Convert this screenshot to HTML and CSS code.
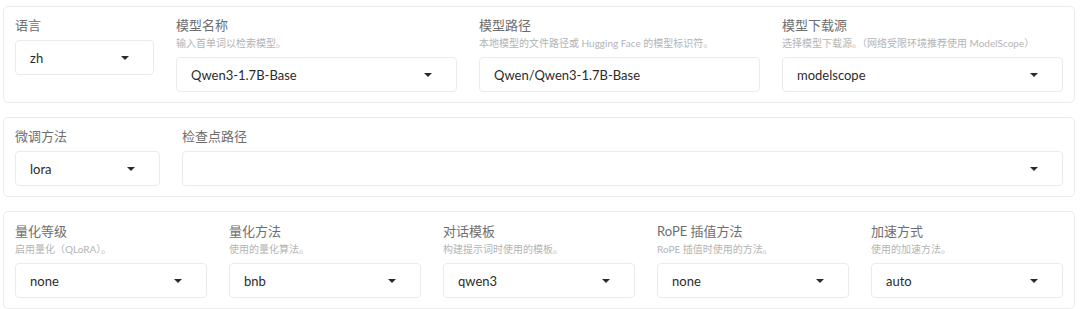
FILE: index.html
```html
<!DOCTYPE html>
<html lang="zh">
<head>
    <meta charset="UTF-8">
    <meta name="viewport" content="width=device-width, initial-scale=1.0">
    <title>模型设置</title>
    <link rel="stylesheet" href="styles.css">
</head>
<body>

<div class="panel row-top">
    <div class="field">
        <div class="field-label">语言</div>
        <div class="select"><span>zh</span><i class="caret"></i></div>
    </div>
    <div class="field">
        <div class="field-label">模型名称</div>
        <div class="field-info">输入首单词以检索模型。</div>
        <div class="select"><span>Qwen3-1.7B-Base</span><i class="caret"></i></div>
    </div>
    <div class="field">
        <div class="field-label">模型路径</div>
        <div class="field-info">本地模型的文件路径或 Hugging Face 的模型标识符。</div>
        <div class="select"><span>Qwen/Qwen3-1.7B-Base</span></div>
    </div>
    <div class="field">
        <div class="field-label">模型下载源</div>
        <div class="field-info">选择模型下载源。（网络受限环境推荐使用 ModelScope）</div>
        <div class="select"><span>modelscope</span><i class="caret"></i></div>
    </div>
</div>

<div class="panel row-mid">
    <div class="field">
        <div class="field-label">微调方法</div>
        <div class="select"><span>lora</span><i class="caret"></i></div>
    </div>
    <div class="field">
        <div class="field-label">检查点路径</div>
        <div class="select"><span></span><i class="caret"></i></div>
    </div>
</div>

<div class="panel row-bottom">
    <div class="field">
        <div class="field-label">量化等级</div>
        <div class="field-info">启用量化（QLoRA）。</div>
        <div class="select"><span>none</span><i class="caret"></i></div>
    </div>
    <div class="field">
        <div class="field-label">量化方法</div>
        <div class="field-info">使用的量化算法。</div>
        <div class="select"><span>bnb</span><i class="caret"></i></div>
    </div>
    <div class="field">
        <div class="field-label">对话模板</div>
        <div class="field-info">构建提示词时使用的模板。</div>
        <div class="select"><span>qwen3</span><i class="caret"></i></div>
    </div>
    <div class="field">
        <div class="field-label">RoPE 插值方法</div>
        <div class="field-info">RoPE 插值时使用的方法。</div>
        <div class="select"><span>none</span><i class="caret"></i></div>
    </div>
    <div class="field">
        <div class="field-label">加速方式</div>
        <div class="field-info">使用的加速方法。</div>
        <div class="select"><span>auto</span><i class="caret"></i></div>
    </div>
</div>

</body>
</html>
```

FILE: styles.css
```css
body {
    font-family: Lato, "Noto Sans CJK SC", sans-serif;
    margin: 6px 5px 0 3px;
    background-color: #fff;
}
.panel {
    display: grid;
    gap: 22px;
    align-items: start;
    border: 1px solid #ebebeb;
    border-radius: 5px;
    padding: 9px 11px 10px;
    margin-bottom: 14px;
}
.row-top {
    grid-template-columns: 139px repeat(3, 1fr);
}
.row-mid {
    grid-template-columns: 145px 1fr;
}
.row-bottom {
    grid-template-columns: repeat(5, 1fr);
    padding-top: 10px;
}
.field {
    min-width: 0;
}
.field-label {
    font-size: 13px;
    line-height: 18px;
    color: #6e6e6e;
    margin-bottom: 6px;
    white-space: nowrap;
}
.field-info {
    font-size: 10px;
    line-height: 14px;
    color: #b4b4b4;
    margin-top: -4px;
    margin-bottom: 7px;
    white-space: nowrap;
}
.select {
    display: flex;
    align-items: center;
    justify-content: space-between;
    height: 35px;
    box-sizing: border-box;
    border: 1px solid #ebebeb;
    border-radius: 4px;
    padding: 0 24px 0 14px;
    font-size: 13px;
    color: #2b2b2b;
}
.caret {
    width: 0;
    height: 0;
    border-left: 4px solid transparent;
    border-right: 4px solid transparent;
    border-top: 4px solid #2b2b2b;
}
```
